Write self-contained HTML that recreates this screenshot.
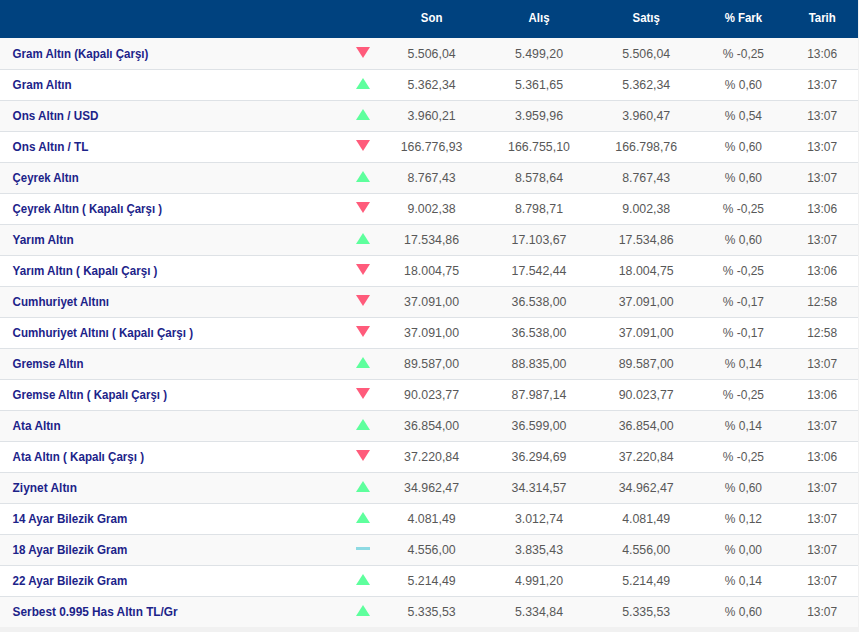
<!DOCTYPE html>
<html lang="tr">
<head>
<meta charset="utf-8">
<title>Altın Fiyatları</title>
<style>
*{box-sizing:border-box;margin:0;padding:0}
html,body{width:859px;height:632px;overflow:hidden;background:#f1f1f1}
body{font-family:"Liberation Sans",sans-serif;font-size:13px;color:#585858}
.t{position:absolute;left:0;top:0;width:858px;background:#fff}
.h{position:relative;height:38px;background:#00427f;color:#fff;font-weight:bold;line-height:36px}
.r{position:relative;height:31px;line-height:30px;border-top:1px solid #dee2e6;background:#fff}
.r:nth-child(even){background:#f9f9f9}
.r:nth-child(2){border-top-color:#f9f9f9}
.h span,.r span{position:absolute;top:0;width:110px;text-align:center;white-space:nowrap;transform-origin:50% 0}
.r span{transform:translateX(var(--tx)) scaleX(0.95)}
.r .c6,.r .c7{transform:translateX(var(--tx)) scaleX(0.92)}
.h span{transform:translateX(var(--tx)) scaleX(0.88)}
.c3{left:376px;--tx:0.6px}
.c4{left:484px;--tx:0px}
.c5{left:591px;--tx:0.2px}
.c6{left:688px;--tx:0.4px}
.c7{left:767px;--tx:0.2px}
.n{position:absolute;left:12px;top:0;font-weight:bold;color:#1c2389;white-space:nowrap;transform:scaleX(0.877);transform-origin:0 0}
.r i{position:absolute;left:356px;width:0;height:0}
i.u{top:8px;border-left:7px solid transparent;border-right:7px solid transparent;border-bottom:11px solid #5eff9d}
i.d{top:8px;border-left:7px solid transparent;border-right:7px solid transparent;border-top:11px solid #ff5b7b}
.r i.z{top:12px;width:14px;height:3px;background:#8edae3}
</style>
</head>
<body>
<div class="t">
<div class="h"><span class="c3">Son</span><span class="c4">Alış</span><span class="c5">Satış</span><span class="c6">% Fark</span><span class="c7">Tarih</span></div>
<div class="r"><a class="n" style="transform:translateX(0.6px) scaleX(0.885)">Gram Altın (Kapalı Çarşı)</a><i class="d"></i><span class="c3">5.506,04</span><span class="c4">5.499,20</span><span class="c5">5.506,04</span><span class="c6">% -0,25</span><span class="c7">13:06</span></div>
<div class="r"><a class="n" style="transform:translateX(0.6px) scaleX(0.894)">Gram Altın</a><i class="u"></i><span class="c3">5.362,34</span><span class="c4">5.361,65</span><span class="c5">5.362,34</span><span class="c6">% 0,60</span><span class="c7">13:07</span></div>
<div class="r"><a class="n" style="transform:translateX(0.6px) scaleX(0.897)">Ons Altın / USD</a><i class="u"></i><span class="c3">3.960,21</span><span class="c4">3.959,96</span><span class="c5">3.960,47</span><span class="c6">% 0,54</span><span class="c7">13:07</span></div>
<div class="r"><a class="n" style="transform:translateX(0.6px) scaleX(0.903)">Ons Altın / TL</a><i class="d"></i><span class="c3">166.776,93</span><span class="c4">166.755,10</span><span class="c5">166.798,76</span><span class="c6">% 0,60</span><span class="c7">13:07</span></div>
<div class="r"><a class="n" style="transform:translateX(0.6px) scaleX(0.876)">Çeyrek Altın</a><i class="u"></i><span class="c3">8.767,43</span><span class="c4">8.578,64</span><span class="c5">8.767,43</span><span class="c6">% 0,60</span><span class="c7">13:07</span></div>
<div class="r"><a class="n" style="transform:translateX(0.6px) scaleX(0.879)">Çeyrek Altın ( Kapalı Çarşı )</a><i class="d"></i><span class="c3">9.002,38</span><span class="c4">8.798,71</span><span class="c5">9.002,38</span><span class="c6">% -0,25</span><span class="c7">13:06</span></div>
<div class="r"><a class="n" style="transform:translateX(0.6px) scaleX(0.906)">Yarım Altın</a><i class="u"></i><span class="c3">17.534,86</span><span class="c4">17.103,67</span><span class="c5">17.534,86</span><span class="c6">% 0,60</span><span class="c7">13:07</span></div>
<div class="r"><a class="n" style="transform:translateX(0.6px) scaleX(0.894)">Yarım Altın ( Kapalı Çarşı )</a><i class="d"></i><span class="c3">18.004,75</span><span class="c4">17.542,44</span><span class="c5">18.004,75</span><span class="c6">% -0,25</span><span class="c7">13:06</span></div>
<div class="r"><a class="n" style="transform:translateX(0.6px) scaleX(0.894)">Cumhuriyet Altını</a><i class="d"></i><span class="c3">37.091,00</span><span class="c4">36.538,00</span><span class="c5">37.091,00</span><span class="c6">% -0,17</span><span class="c7">12:58</span></div>
<div class="r"><a class="n" style="transform:translateX(0.6px) scaleX(0.891)">Cumhuriyet Altını ( Kapalı Çarşı )</a><i class="d"></i><span class="c3">37.091,00</span><span class="c4">36.538,00</span><span class="c5">37.091,00</span><span class="c6">% -0,17</span><span class="c7">12:58</span></div>
<div class="r"><a class="n" style="transform:translateX(0.6px) scaleX(0.882)">Gremse Altın</a><i class="u"></i><span class="c3">89.587,00</span><span class="c4">88.835,00</span><span class="c5">89.587,00</span><span class="c6">% 0,14</span><span class="c7">13:07</span></div>
<div class="r"><a class="n" style="transform:translateX(0.6px) scaleX(0.882)">Gremse Altın ( Kapalı Çarşı )</a><i class="d"></i><span class="c3">90.023,77</span><span class="c4">87.987,14</span><span class="c5">90.023,77</span><span class="c6">% -0,25</span><span class="c7">13:06</span></div>
<div class="r"><a class="n" style="transform:translateX(0.6px) scaleX(0.906)">Ata Altın</a><i class="u"></i><span class="c3">36.854,00</span><span class="c4">36.599,00</span><span class="c5">36.854,00</span><span class="c6">% 0,14</span><span class="c7">13:07</span></div>
<div class="r"><a class="n" style="transform:translateX(0.6px) scaleX(0.891)">Ata Altın ( Kapalı Çarşı )</a><i class="d"></i><span class="c3">37.220,84</span><span class="c4">36.294,69</span><span class="c5">37.220,84</span><span class="c6">% -0,25</span><span class="c7">13:06</span></div>
<div class="r"><a class="n" style="transform:translateX(0.6px) scaleX(0.915)">Ziynet Altın</a><i class="u"></i><span class="c3">34.962,47</span><span class="c4">34.314,57</span><span class="c5">34.962,47</span><span class="c6">% 0,60</span><span class="c7">13:07</span></div>
<div class="r"><a class="n" style="transform:translateX(0.6px) scaleX(0.894)">14 Ayar Bilezik Gram</a><i class="u"></i><span class="c3">4.081,49</span><span class="c4">3.012,74</span><span class="c5">4.081,49</span><span class="c6">% 0,12</span><span class="c7">13:07</span></div>
<div class="r"><a class="n" style="transform:translateX(0.6px) scaleX(0.894)">18 Ayar Bilezik Gram</a><i class="z"></i><span class="c3">4.556,00</span><span class="c4">3.835,43</span><span class="c5">4.556,00</span><span class="c6">% 0,00</span><span class="c7">13:07</span></div>
<div class="r"><a class="n" style="transform:translateX(0.6px) scaleX(0.894)">22 Ayar Bilezik Gram</a><i class="u"></i><span class="c3">5.214,49</span><span class="c4">4.991,20</span><span class="c5">5.214,49</span><span class="c6">% 0,14</span><span class="c7">13:07</span></div>
<div class="r"><a class="n" style="transform:translateX(0.6px) scaleX(0.909)">Serbest 0.995 Has Altın TL/Gr</a><i class="u"></i><span class="c3">5.335,53</span><span class="c4">5.334,84</span><span class="c5">5.335,53</span><span class="c6">% 0,60</span><span class="c7">13:07</span></div>
</div>
</body>
</html>
